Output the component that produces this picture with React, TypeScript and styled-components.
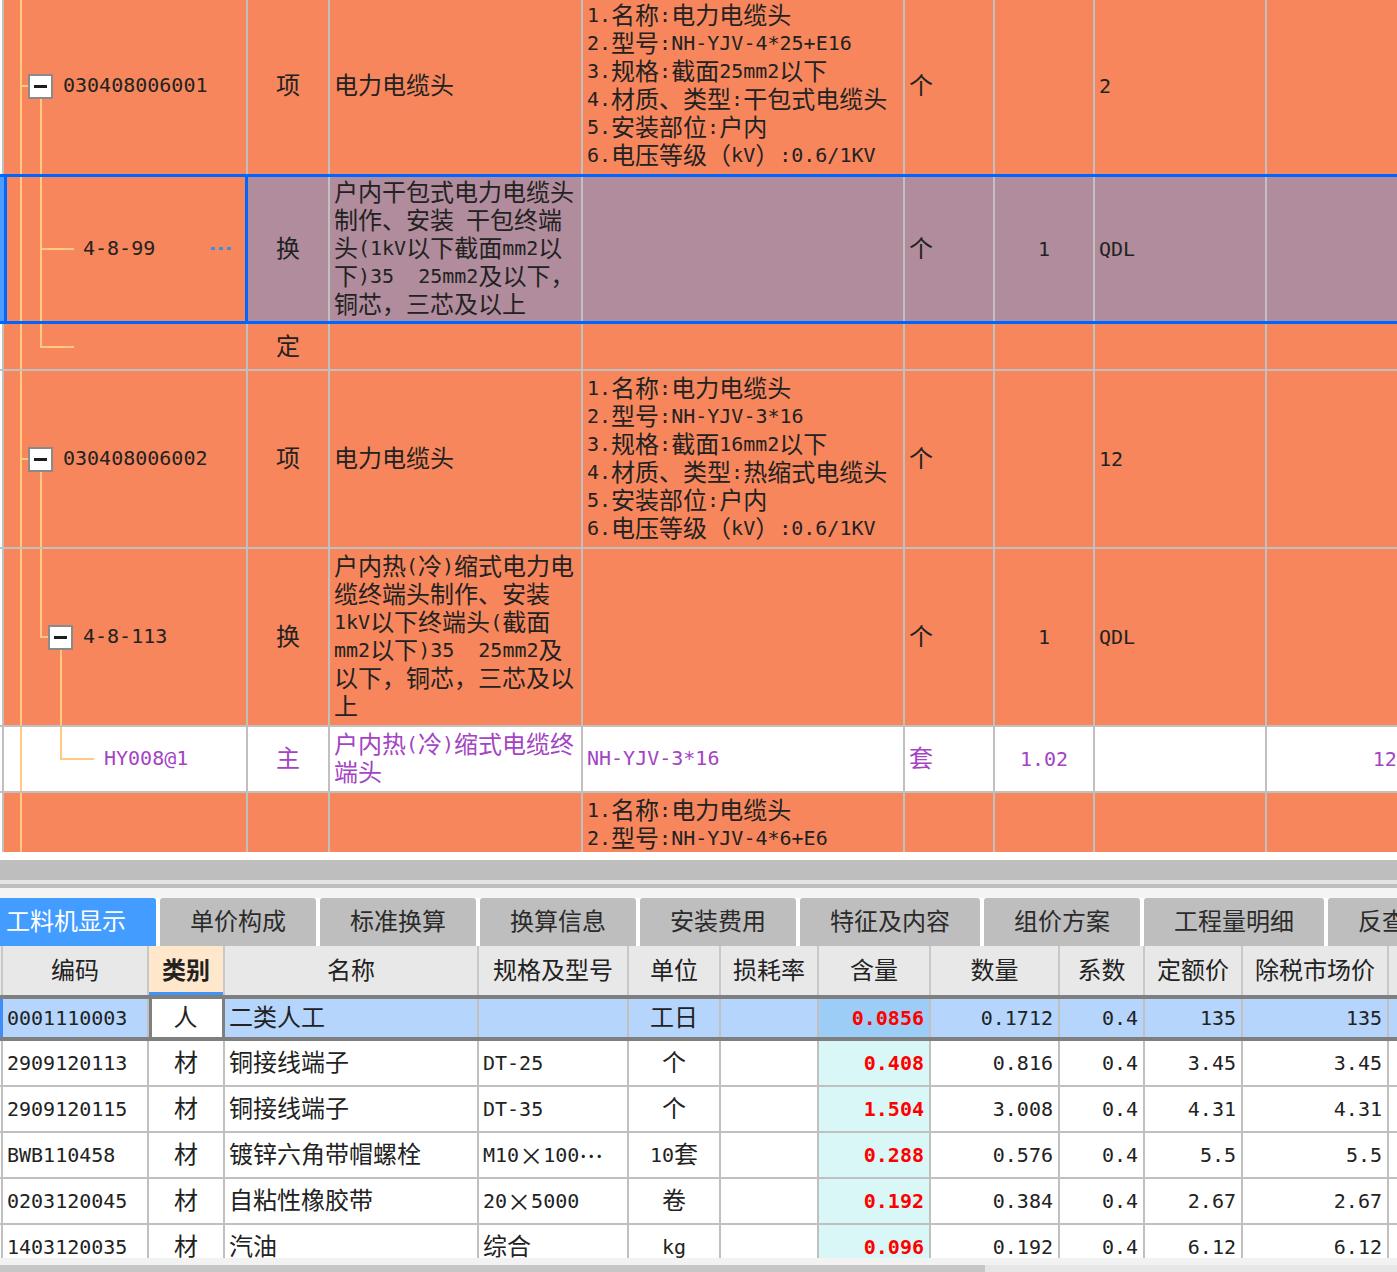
import React from "react";
import styled, { createGlobalStyle, css } from "styled-components";

const TEXT_STACK = `"DejaVu Sans Mono", "Noto Sans CJK SC", monospace`;
const CJK = `"Noto Sans CJK SC", "Noto Sans", sans-serif`;
const MONO = `"DejaVu Sans Mono", "Liberation Mono", monospace`;
const ORANGE = "#f7865c";
const PURPLE_BG = "#b08c9c";
const SEL_BLUE = "#0066ff";
const GRID = "#c0c0c0";
const TREE = "#ffca80";
const INK = "#222222";
const VIOLET = "#a444c4";

const GlobalStyle = createGlobalStyle`
  *, *::before, *::after { box-sizing: border-box; }
  html, body { margin: 0; padding: 0; background: #ffffff; overflow: hidden; }
  body { font-family: ${TEXT_STACK}; color: ${INK}; }
  #root { width: 1397px; height: 1272px; overflow: hidden; }
`;

/* ---------- mixed CJK / half-width text ---------- */
const Asc = styled.span`
  font-family: ${MONO};
  font-size: 20px;
  line-height: 16px;
  vertical-align: 2px;
  white-space: pre;
`;

const Sym = styled.span`
  font-family: ${CJK};
`;

const RUN = /([\x20-\x7e]+|[×…]+)/;
function Mixed({ text }: { text: string }) {
  const parts = text.split(RUN).filter(Boolean);
  return (
    <>
      {parts.map((p, i) =>
        /^[\x20-\x7e]+$/.test(p) ? (
          <Asc key={i}>{p}</Asc>
        ) : /^[×…]+$/.test(p) ? (
          <Sym key={i}>{p}</Sym>
        ) : (
          <React.Fragment key={i}>{p}</React.Fragment>
        )
      )}
    </>
  );
}

const Line = styled.div``;
function Lines({ lines }: { lines?: string[] }) {
  if (!lines) return null;
  return (
    <>
      {lines.map((l, i) => (
        <Line key={i}>
          <Mixed text={l} />
        </Line>
      ))}
    </>
  );
}

/* ---------- page ---------- */
const Page = styled.div`
  width: 1397px;
  height: 1272px;
  display: flex;
  flex-direction: column;
  overflow: hidden;
  background: #ffffff;
`;

/* ---------- top tree grid ---------- */
const TOP_COLS = "4px 244px 82px 253px 322px 90px 100px 172px 184px";

const TopViewport = styled.div`
  flex: none;
  height: 852px;
  overflow: hidden;
  background: #ffffff;
`;

const TopSheet = styled.div`
  width: 1451px;
  margin-top: -2px;
  font-size: 24px;
  line-height: 28px;
`;

const TRow = styled.div<{ $sel?: boolean; $line?: boolean; $ink?: string }>`
  display: grid;
  grid-template-columns: ${TOP_COLS};
  color: ${(p) => p.$ink ?? INK};
  border-bottom: ${(p) => (p.$line === false ? "none" : `2px solid ${GRID}`)};
  ${(p) =>
    p.$sel &&
    css`
      border-top: 3px solid ${SEL_BLUE};
      border-bottom: 3px solid ${SEL_BLUE};
    `}
`;

const TGutter = styled.div<{ $sel?: boolean }>`
  background: ${(p) => (p.$sel ? "#4d9dff" : "#ffffff")};
  border-right: 2px solid ${(p) => (p.$sel ? "#4d9dff" : GRID)};
`;

type Align = "left" | "center" | "right";
const flexAlign = (a?: Align) => (a === "center" ? "center" : a === "right" ? "flex-end" : "flex-start");

const TCell = styled.div<{ $bg: string; $align?: Align; $tight?: boolean }>`
  min-height: 45px;
  padding: ${(p) => (p.$tight ? "2px" : "4px")} 4px;
  background: ${(p) => p.$bg};
  border-right: 2px solid ${GRID};
  display: flex;
  flex-direction: column;
  justify-content: center;
  align-items: ${(p) => flexAlign(p.$align)};
  white-space: nowrap;
`;

const CodeCell = styled.div<{ $bg: string; $sel?: boolean }>`
  min-height: 45px;
  background: ${(p) => p.$bg};
  border-right: ${(p) => (p.$sel ? `3px solid ${SEL_BLUE}` : `2px solid ${GRID}`)};
  box-shadow: ${(p) => (p.$sel ? `inset 3px 0 0 ${SEL_BLUE}` : "none")};
  display: flex;
  align-items: center;
  white-space: nowrap;
`;

function guideLayers(x: number, v?: "full" | "top", h?: boolean) {
  const g = `linear-gradient(${TREE}, ${TREE})`;
  const layers: string[] = [];
  if (v === "full") layers.push(`${g} ${x - 1}px 0 / 2px 100% no-repeat`);
  if (v === "top") layers.push(`${g} ${x - 1}px 0 / 2px calc(50% + 1px) no-repeat`);
  if (h) layers.push(`${g} ${x - 1}px 50% / calc(100% - ${x - 1}px) 2px no-repeat`);
  return layers.length ? layers.join(", ") : "none";
}

const Guide = styled.div<{ $w: number; $x?: number; $v?: "full" | "top"; $h?: boolean }>`
  flex: none;
  align-self: stretch;
  width: ${(p) => p.$w}px;
  background: ${(p) => guideLayers(p.$x ?? 0, p.$v, p.$h)};
`;

const BoxCol = styled.div<{ $tail?: boolean }>`
  flex: none;
  align-self: stretch;
  width: 25px;
  display: flex;
  align-items: center;
  justify-content: center;
  background: ${(p) =>
    p.$tail ? `linear-gradient(${TREE}, ${TREE}) 12px 100% / 2px 50% no-repeat` : "none"};
`;

const Toggle = styled.span`
  flex: none;
  width: 25px;
  height: 25px;
  border: 2px solid #8a8a8a;
  background: #ffffff;
  display: flex;
  align-items: center;
  justify-content: center;
  &::before {
    content: "";
    width: 13px;
    height: 3px;
    background: #1e1e1e;
  }
`;

const Code = styled.span<{ $ml: number }>`
  margin-left: ${(p) => p.$ml}px;
`;

const Spacer = styled.span`
  flex: 1;
`;

const DotsSvg = styled.svg`
  flex: none;
  margin-right: 14px;
`;

function MoreDots() {
  return (
    <DotsSvg width="20" height="4" viewBox="0 0 20 4">
      <rect x="0" y="0" width="4" height="3" fill="#3c8fe0" />
      <rect x="8" y="0" width="4" height="3" fill="#3c8fe0" />
      <rect x="16" y="0" width="4" height="3" fill="#3c8fe0" />
    </DotsSvg>
  );
}

type TopCells = {
  kind?: string;
  name?: string[];
  spec?: string[];
  unit?: string;
  qty?: string;
  c7?: string;
  c8?: string;
};

function TopRow({
  tree,
  sel,
  white,
  ink,
  line,
  cells,
}: {
  tree: React.ReactNode;
  sel?: boolean;
  white?: boolean;
  ink?: string;
  line?: boolean;
  cells: TopCells;
}) {
  const bg = white ? "#ffffff" : ORANGE;
  const rest = sel ? PURPLE_BG : bg;
  return (
    <TRow $sel={sel} $line={line} $ink={ink}>
      <TGutter $sel={sel} />
      <CodeCell $bg={bg} $sel={sel}>
        {tree}
      </CodeCell>
      <TCell $bg={rest} $tight={sel} $align="center">
        {cells.kind && <Mixed text={cells.kind} />}
      </TCell>
      <TCell $bg={rest} $tight={sel}>
        <Lines lines={cells.name} />
      </TCell>
      <TCell $bg={rest} $tight={sel}>
        <Lines lines={cells.spec} />
      </TCell>
      <TCell $bg={rest} $tight={sel}>
        {cells.unit && <Mixed text={cells.unit} />}
      </TCell>
      <TCell $bg={rest} $tight={sel} $align="center">
        {cells.qty && <Mixed text={cells.qty} />}
      </TCell>
      <TCell $bg={rest} $tight={sel}>
        {cells.c7 && <Mixed text={cells.c7} />}
      </TCell>
      <TCell $bg={rest} $tight={sel} $align="right">
        {cells.c8 && <Mixed text={cells.c8} />}
      </TCell>
    </TRow>
  );
}

/* ---------- splitter + tabs ---------- */
const SplitZone = styled.div`
  flex: none;
  height: 46px;
  background: linear-gradient(
    #ffffff 0 8px,
    #bebebe 8px 28px,
    #e4e4e4 28px 32px,
    #bebebe 32px 36px,
    #f4f4f4 36px 46px
  );
`;

const TabBar = styled.div`
  flex: none;
  height: 48px;
  margin-left: -24px;
  display: flex;
  gap: 4px;
  background: #ffffff;
  overflow: hidden;
  line-height: 28px;
`;

const Tab = styled.div<{ $active?: boolean; $w: number }>`
  flex: none;
  width: ${(p) => p.$w}px;
  height: 48px;
  display: flex;
  align-items: center;
  justify-content: center;
  border-radius: 3px 3px 0 0;
  background: ${(p) => (p.$active ? "#439cff" : "#bebebe")};
  color: ${(p) => (p.$active ? "#ffffff" : "#2b2b2b")};
  font-size: 24px;
  white-space: nowrap;
`;

const TABS: { label: string; w: number }[] = [
  { label: "工料机显示", w: 180 },
  { label: "单价构成", w: 156 },
  { label: "标准换算", w: 156 },
  { label: "换算信息", w: 156 },
  { label: "安装费用", w: 156 },
  { label: "特征及内容", w: 180 },
  { label: "组价方案", w: 156 },
  { label: "工程量明细", w: 180 },
  { label: "反查图形工程量", w: 228 },
];

/* ---------- bottom material grid ---------- */
const BOT_COLS = "3px 146px 76px 254px 150px 92px 98px 112px 129px 85px 98px 146px 61px";

const BottomViewport = styled.div`
  flex: none;
  height: 312px;
  overflow: hidden;
  font-size: 24px;
  line-height: 28px;
`;

const BHead = styled.div`
  display: grid;
  grid-template-columns: ${BOT_COLS};
  width: 1450px;
  height: 49px;
  background: #e8e8e8;
`;

const HGutter = styled.div`
  background: #e8e8e8;
  border-right: 2px solid #c8c8c8;
`;

const HCell = styled.div<{ $hl?: boolean }>`
  display: flex;
  align-items: center;
  justify-content: center;
  border-right: 2px solid #c8c8c8;
  background: ${(p) => (p.$hl ? "#ffe7cb" : "#e8e8e8")};
  font-weight: ${(p) => (p.$hl ? 700 : 400)};
  box-shadow: ${(p) => (p.$hl ? "inset 0 -3px 0 #3f95f7" : "none")};
  white-space: nowrap;
`;

const BRow = styled.div<{ $sel?: boolean }>`
  display: grid;
  grid-template-columns: ${BOT_COLS};
  width: 1450px;
  height: 46px;
  background: ${(p) => (p.$sel ? "#b5d5fc" : "#ffffff")};
  border-top: ${(p) => (p.$sel ? "4px solid #7f7f7f" : "none")};
  border-bottom: ${(p) => (p.$sel ? "4px solid #7f7f7f" : `2px solid ${GRID}`)};
`;

const BGutter = styled.div<{ $sel?: boolean }>`
  background: ${(p) => (p.$sel ? "#3f8ef7" : "#ffffff")};
  border-right: ${(p) => (p.$sel ? "none" : `2px solid ${GRID}`)};
`;

const BCell = styled.div<{ $align?: Align; $bg?: string; $edit?: boolean; $hot?: boolean }>`
  display: flex;
  align-items: center;
  justify-content: ${(p) => flexAlign(p.$align)};
  padding: 0 ${(p) => (p.$align === "right" ? "5px" : "4px")};
  border-right: 2px solid ${GRID};
  background: ${(p) => p.$bg ?? "transparent"};
  color: ${(p) => (p.$hot ? "#ff0000" : INK)};
  font-weight: ${(p) => (p.$hot ? 700 : 400)};
  white-space: nowrap;
  ${(p) =>
    p.$edit &&
    css`
      background: #ffffff;
      border-right: 3px solid #7f7f7f;
      box-shadow: inset 3px 0 0 #7f7f7f;
    `}
`;

const HScroll = styled.div`
  flex: none;
  height: 14px;
  padding-top: 7px;
  background: #f2f2f2;
`;

const HTrack = styled.div`
  height: 7px;
  background: #e6e6e6;
`;

const HThumb = styled.div`
  width: 985px;
  height: 7px;
  background: #c6c6c6;
`;

const HEADERS = ["编码", "类别", "名称", "规格及型号", "单位", "损耗率", "含量", "数量", "系数", "定额价", "除税市场价", ""];

type Mat = {
  code: string;
  kind: string;
  name: string;
  spec: string;
  unit: string;
  amt: string;
  qty: string;
  coef: string;
  base: string;
  market: string;
  sel?: boolean;
};

const MATERIALS: Mat[] = [
  { code: "0001110003", kind: "人", name: "二类人工", spec: "", unit: "工日", amt: "0.0856", qty: "0.1712", coef: "0.4", base: "135", market: "135", sel: true },
  { code: "2909120113", kind: "材", name: "铜接线端子", spec: "DT-25", unit: "个", amt: "0.408", qty: "0.816", coef: "0.4", base: "3.45", market: "3.45" },
  { code: "2909120115", kind: "材", name: "铜接线端子", spec: "DT-35", unit: "个", amt: "1.504", qty: "3.008", coef: "0.4", base: "4.31", market: "4.31" },
  { code: "BWB110458", kind: "材", name: "镀锌六角带帽螺栓", spec: "M10×100…", unit: "10套", amt: "0.288", qty: "0.576", coef: "0.4", base: "5.5", market: "5.5" },
  { code: "0203120045", kind: "材", name: "自粘性橡胶带", spec: "20×5000", unit: "卷", amt: "0.192", qty: "0.384", coef: "0.4", base: "2.67", market: "2.67" },
  { code: "1403120035", kind: "材", name: "汽油", spec: "综合", unit: "kg", amt: "0.096", qty: "0.192", coef: "0.4", base: "6.12", market: "6.12" },
];

function MaterialRow({ m }: { m: Mat }) {
  return (
    <BRow $sel={m.sel}>
      <BGutter $sel={m.sel} />
      <BCell>
        <Mixed text={m.code} />
      </BCell>
      <BCell $align="center" $edit={m.sel}>
        {m.kind}
      </BCell>
      <BCell>{m.name}</BCell>
      <BCell>
        <Mixed text={m.spec} />
      </BCell>
      <BCell $align="center">
        <Mixed text={m.unit} />
      </BCell>
      <BCell />
      <BCell $align="right" $hot $bg={m.sel ? "#9bcdf6" : "#d9f7f7"}>
        <Mixed text={m.amt} />
      </BCell>
      <BCell $align="right">
        <Mixed text={m.qty} />
      </BCell>
      <BCell $align="right">
        <Mixed text={m.coef} />
      </BCell>
      <BCell $align="right">
        <Mixed text={m.base} />
      </BCell>
      <BCell $align="right">
        <Mixed text={m.market} />
      </BCell>
      <BCell />
    </BRow>
  );
}

const SPEC_A = [
  "1.名称:电力电缆头",
  "2.型号:NH-YJV-4*25+E16",
  "3.规格:截面25mm2以下",
  "4.材质、类型:干包式电缆头",
  "5.安装部位:户内",
  "6.电压等级（kV）:0.6/1KV",
];

const SPEC_D = [
  "1.名称:电力电缆头",
  "2.型号:NH-YJV-3*16",
  "3.规格:截面16mm2以下",
  "4.材质、类型:热缩式电缆头",
  "5.安装部位:户内",
  "6.电压等级（kV）:0.6/1KV",
];

const SPEC_G = ["1.名称:电力电缆头", "2.型号:NH-YJV-4*6+E6"];

export default function App() {
  return (
    <>
      <GlobalStyle />
      <Page>
        <TopViewport>
          <TopSheet>
            <TopRow
              line={false}
              tree={
                <>
                  <Guide $w={24} $x={17} $v="full" $h />
                  <BoxCol $tail>
                    <Toggle />
                  </BoxCol>
                  <Code $ml={10}>
                    <Mixed text="030408006001" />
                  </Code>
                </>
              }
              cells={{ kind: "项", name: ["电力电缆头"], spec: SPEC_A, unit: "个", c7: "2" }}
            />
            <TopRow
              sel
              tree={
                <>
                  <Guide $w={24} $x={17} $v="full" />
                  <Guide $w={46} $x={13} $v="full" $h />
                  <Code $ml={9}>
                    <Mixed text="4-8-99" />
                  </Code>
                  <Spacer />
                  <MoreDots />
                </>
              }
              cells={{
                kind: "换",
                name: [
                  "户内干包式电力电缆头",
                  "制作、安装 干包终端",
                  "头(1kV以下截面mm2以",
                  "下)35  25mm2及以下，",
                  "铜芯，三芯及以上",
                ],
                unit: "个",
                qty: "1",
                c7: "QDL",
              }}
            />
            <TopRow
              tree={
                <>
                  <Guide $w={24} $x={17} $v="full" />
                  <Guide $w={46} $x={13} $v="top" $h />
                </>
              }
              cells={{ kind: "定" }}
            />
            <TopRow
              tree={
                <>
                  <Guide $w={24} $x={17} $v="full" $h />
                  <BoxCol $tail>
                    <Toggle />
                  </BoxCol>
                  <Code $ml={10}>
                    <Mixed text="030408006002" />
                  </Code>
                </>
              }
              cells={{ kind: "项", name: ["电力电缆头"], spec: SPEC_D, unit: "个", c7: "12" }}
            />
            <TopRow
              tree={
                <>
                  <Guide $w={24} $x={17} $v="full" />
                  <Guide $w={20} $x={13} $v="top" $h />
                  <BoxCol $tail>
                    <Toggle />
                  </BoxCol>
                  <Code $ml={10}>
                    <Mixed text="4-8-113" />
                  </Code>
                </>
              }
              cells={{
                kind: "换",
                name: [
                  "户内热(冷)缩式电力电",
                  "缆终端头制作、安装",
                  "1kV以下终端头(截面",
                  "mm2以下)35  25mm2及",
                  "以下，铜芯，三芯及以",
                  "上",
                ],
                unit: "个",
                qty: "1",
                c7: "QDL",
              }}
            />
            <TopRow
              white
              ink={VIOLET}
              tree={
                <>
                  <Guide $w={24} $x={17} $v="full" />
                  <Guide $w={20} />
                  <Guide $w={46} $x={13} $v="top" $h />
                  <Code $ml={10}>
                    <Mixed text="HY008@1" />
                  </Code>
                </>
              }
              cells={{
                kind: "主",
                name: ["户内热(冷)缩式电缆终", "端头"],
                spec: ["NH-YJV-3*16"],
                unit: "套",
                qty: "1.02",
                c8: "122.40",
              }}
            />
            <TopRow tree={<Guide $w={24} $x={17} $v="full" />} cells={{ spec: SPEC_G }} />
          </TopSheet>
        </TopViewport>

        <SplitZone />

        <TabBar>
          {TABS.map((t, i) => (
            <Tab key={t.label} $w={t.w} $active={i === 0}>
              {t.label}
            </Tab>
          ))}
        </TabBar>

        <BottomViewport>
          <BHead>
            <HGutter />
            {HEADERS.map((h, i) => (
              <HCell key={i} $hl={h === "类别"}>
                {h}
              </HCell>
            ))}
          </BHead>
          {MATERIALS.map((m) => (
            <MaterialRow key={m.code} m={m} />
          ))}
        </BottomViewport>

        <HScroll>
          <HTrack>
            <HThumb />
          </HTrack>
        </HScroll>
      </Page>
    </>
  );
}
